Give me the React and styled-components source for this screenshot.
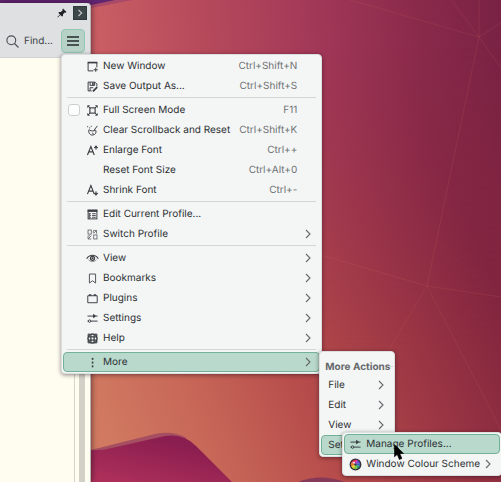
import React from "react";
import styled, { createGlobalStyle } from "styled-components";

const Global = createGlobalStyle`
  *, *::before, *::after { box-sizing: border-box; }
  body {
    margin: 0;
    font-family: Inter, "Noto Sans", sans-serif;
    font-size: 10px;
    line-height: 16px;
    text-rendering: geometricPrecision;
    color: #2c3034;
  }
  button { font: inherit; color: inherit; text-rendering: inherit; }
  svg { display: block; }
`;

const Desktop = styled.main`
  position: relative;
  display: flex;
  align-items: stretch;
  min-height: 100vh;
  padding-top: 3px;
  overflow: hidden;
  background: #a03a50;
`;

const Wallpaper = styled.svg`
  position: absolute;
  inset: 0;
  width: 100%;
  height: 100%;
`;

const Terminal = styled.section`
  position: relative;
  display: flex;
  flex-direction: column;
  border-right: 1px solid #b9b4b4;
  border-top-right-radius: 4px;
  background: #dfe0e2;
  box-shadow: 0 1px 6px rgba(30, 10, 20, 0.7);
`;

const TitleBar = styled.header`
  display: flex;
  justify-content: flex-end;
  align-items: center;
  gap: 6px;
  height: 20px;
  padding-right: 3px;
`;

const TitleButton = styled.button`
  display: grid;
  place-items: center;
  padding: 0;
  border: 0;
  background: none;
`;

const ToolBar = styled.div`
  display: flex;
  align-items: center;
  gap: 8px;
  padding: 6px 5px 4px 6px;
  border-bottom: 1px solid #d0d1d1;
`;

const FindButton = styled.button`
  display: flex;
  align-items: center;
  gap: 5px;
  padding: 0;
  border: 0;
  background: none;
  color: #3c4044;
`;

const MenuAnchor = styled.div`
  position: relative;
`;

const MenuButton = styled.button`
  display: grid;
  place-items: center;
  width: 24px;
  height: 24px;
  padding: 0;
  border: 1px solid #92c9b5;
  border-radius: 4px;
  background: #b7d1c7;
`;

const Screen = styled.div`
  display: flex;
  flex: 1;
  justify-content: flex-end;
  background: #fffdf0;
`;

const ScrollTrack = styled.div`
  display: flex;
  padding: 0 5px 0 4px;
  border-left: 1px solid #d6d5ca;
`;

const ScrollThumb = styled.div`
  width: 6px;
  background: #d2d1c7;
`;

const Menu = styled.div`
  position: absolute;
  top: ${(p) => p.$top};
  left: ${(p) => p.$left};
  z-index: 1;
  padding: 1px;
  border: 1px solid #dcdfe0;
  border-radius: 4px;
  background: #f4f6f5;
  box-shadow: 0 1px 4px rgba(30, 10, 20, 0.5);
  white-space: nowrap;
`;

const Separator = styled.hr`
  height: 1px;
  margin: 1px 4px 2px;
  border: 0;
  background: #d3d6d6;
`;

const RowAnchor = styled.div`
  position: relative;
`;

const rowStyle = `
  display: flex;
  align-items: center;
  width: 100%;
  height: 20px;
  border-radius: 4px;
  text-align: left;
`;

const Row = styled.button`
  ${rowStyle}
  padding: 0 8px 0 ${(p) => (p.$plain ? "6px" : "4px")};
  border: 1px solid ${(p) => (p.$active ? "#72b097" : "transparent")};
  background: ${(p) => (p.$active ? "#b9d9cc" : "transparent")};
`;

const CheckRow = styled.label`
  ${rowStyle}
  padding: 0 8px 0 4px;
  border: 1px solid transparent;
`;

const CheckSlot = styled.span`
  flex: none;
  width: 18px;
`;

const CheckBox = styled.input`
  appearance: none;
  display: block;
  width: 12px;
  height: 12px;
  margin: 0;
  border: 1px solid #cdd0d1;
  border-radius: 3px;
  background: #fdfefe;
`;

const IconSlot = styled.span`
  flex: none;
  width: 17px;
`;

const Label = styled.span`
  flex: 1;
`;

const Shortcut = styled.span`
  margin-left: 9px;
  padding-right: 14px;
  color: #6e7174;
`;

const ArrowSlot = styled.span`
  margin-left: 5px;
`;

const MenuTitle = styled.div`
  display: flex;
  align-items: center;
  height: 22px;
  padding: 5px 0 0 4px;
  font-weight: 700;
  color: #65686b;
  &::after {
    content: "";
    flex: 1;
    min-width: 3px;
    height: 1px;
    background: #d3d6d6;
  }
`;

const Pointer = styled.svg`
  position: absolute;
  left: 50px;
  top: 10px;
  z-index: 2;
`;

const Glyph = ({ children, size = 13 }) => (
  <svg width={size} height={size} viewBox="0 0 16 16" fill="none" stroke="#3a3e42" strokeWidth="1.2" aria-hidden="true">
    {children}
  </svg>
);

const icons = {
  newWindow: (
    <Glyph>
      <path d="M9 13.4H2.6V3H13.4V9" />
      <path d="M2 3.2H14" strokeWidth="2" />
      <path d="M12 9.5V14.5M9.5 12H14.5" />
    </Glyph>
  ),
  save: (
    <Glyph>
      <path d="M7 13.4H2.6V2.6H11L13.4 5V8" />
      <path d="M5 2.6V6.6H10.6V2.6M5 13V9.5H9" />
      <path d="M8.5 3V6" strokeWidth="2" />
      <path d="M8.5 14L13.8 8.7" strokeWidth="2.2" />
    </Glyph>
  ),
  fullScreen: (
    <Glyph>
      <rect x="4.8" y="4.8" width="6.4" height="6.4" strokeWidth="1.4" />
      <path d="M2.2 4.6V2.2H4.6M11.4 2.2H13.8V4.6M13.8 11.4V13.8H11.4M4.6 13.8H2.2V11.4M2.2 2.2L5 5M13.8 2.2L11 5M13.8 13.8L11 11M2.2 13.8L5 11" />
    </Glyph>
  ),
  clear: (
    <Glyph>
      <path d="M3.5 7C2.8 11 5 14 8.3 13.6C11.5 13.2 12.8 11 12.2 8" />
      <path d="M4 7.2C7 9.2 9 8.8 12 7.6M10 7.5L14 2.3" />
      <path d="M2 2.5V4M4.5 4V5.5M6.5 2V3.5" strokeWidth="1" />
      <path d="M7.5 11L9.5 12.5" />
    </Glyph>
  ),
  enlarge: (
    <Glyph>
      <path d="M1.8 13.5L6 3L10.2 13.5M3.4 9.7H8.6" strokeWidth="1.4" />
      <path d="M12.3 2V7M10.4 4.5L12.3 2.4L14.2 4.5M10 4.5H14.6" />
    </Glyph>
  ),
  shrink: (
    <Glyph>
      <path d="M1.8 12.5L6 2L10.2 12.5M3.4 8.7H8.6" strokeWidth="1.4" />
      <path d="M12.3 9V14M10.4 11.7L12.3 13.8L14.2 11.7M10 11.5H14.6" />
    </Glyph>
  ),
  edit: (
    <Glyph>
      <rect x="2.6" y="2.6" width="10.8" height="10.8" />
      <path d="M2 3.5H14" strokeWidth="2.6" />
      <path d="M4.5 7H6M4.5 9.2H6M4.5 11.4H6M7.5 7H12M7.5 9.2H12M7.5 11.4H12" strokeWidth="1.1" />
      <path d="M4 6V13" />
    </Glyph>
  ),
  switchProfile: (
    <Glyph>
      <g stroke="#5c6063" strokeWidth="1">
        <rect x="2.5" y="2.5" width="4" height="5" />
        <rect x="9.5" y="8.5" width="4" height="5" />
        <path d="M9 3H13M13 3V7M9.5 6.5L13 3M9 3.5V6" />
        <path d="M2.5 9.5V13.5H6.5M6.5 9.5L2.5 13.5M3 9.5H5" />
      </g>
    </Glyph>
  ),
  view: (
    <Glyph>
      <path d="M0.8 8.3C3 4.9 5.5 4 8 4S13 4.9 15.2 8.3" strokeWidth="1.4" />
      <path d="M3 9.4C4.8 11.4 6.5 11.8 8 11.8S11.2 11.4 13 9.4" strokeWidth="0.7" />
      <circle cx="8" cy="7.8" r="2.5" strokeWidth="1.5" />
      <circle cx="8" cy="7.8" r="1.2" fill="#3a3e42" stroke="none" />
    </Glyph>
  ),
  bookmark: (
    <Glyph>
      <path d="M4.2 2.5H11.8V13.6L8 10.8L4.2 13.6Z" stroke="#505457" />
    </Glyph>
  ),
  plugins: (
    <Glyph>
      <path d="M2.2 4.6H13.8V13.2H2.2Z" />
      <path d="M3.5 3.6H6.5M9.5 3.6H12.5" strokeWidth="1.8" />
    </Glyph>
  ),
  settings: (
    <Glyph>
      <path d="M1.8 5H14.2M6 11.2H14.2M1.8 11.2H2.8" />
      <path d="M9.3 3L11.6 5L9.3 7Z" fill="#3a3e42" />
      <circle cx="4.4" cy="11.2" r="1.5" />
    </Glyph>
  ),
  help: (
    <Glyph>
      <circle cx="8" cy="8" r="5.6" strokeWidth="1.8" />
      <path d="M6 2.5V13.5M10 2.5V13.5M2.5 6H13.5M2.5 10H13.5" strokeWidth="1.5" />
      <path d="M2.6 5V2.6H5M11 2.6H13.4V5M13.4 11V13.4H11M5 13.4H2.6V11" />
    </Glyph>
  ),
  more: (
    <Glyph>
      <g fill="#3a3e42" stroke="none">
        <rect x="7.1" y="2.3" width="2" height="2.4" />
        <rect x="7.1" y="6.9" width="2" height="2.4" />
        <rect x="7.1" y="11.5" width="2" height="2.4" />
      </g>
    </Glyph>
  ),
  colour: (
    <Glyph>
      <g strokeWidth="5" transform="rotate(-112 8 8)">
        {["#d829a8", "#7d3fd0", "#3a62c8", "#2fa36a", "#7cc53a", "#e0d02a", "#ee7a28", "#e02c3c"].map((c, i) => (
          <circle key={c} cx="8" cy="8" r="4" stroke={c} pathLength="8" strokeDasharray="1 7" strokeDashoffset={-i} />
        ))}
      </g>
      <circle cx="8" cy="8" r="6.5" stroke="#33303a" strokeWidth="1.6" />
      <circle cx="8" cy="8" r="1.6" fill="#33363a" stroke="none" />
    </Glyph>
  ),
};

const Chevron = () => (
  <svg width="6" height="10" viewBox="0 0 6 10" fill="none" stroke="#64686b" strokeWidth="1.1" aria-hidden="true">
    <path d="M1 1L5 5L1 9" />
  </svg>
);

const groups = [
  [
    { icon: "newWindow", label: "New Window", keys: "Ctrl+Shift+N" },
    { icon: "save", label: "Save Output As...", keys: "Ctrl+Shift+S" },
  ],
  [
    { icon: "fullScreen", label: "Full Screen Mode", keys: "F11", check: true },
    { icon: "clear", label: "Clear Scrollback and Reset", keys: "Ctrl+Shift+K" },
    { icon: "enlarge", label: "Enlarge Font", keys: "Ctrl++" },
    { label: "Reset Font Size", keys: "Ctrl+Alt+0" },
    { icon: "shrink", label: "Shrink Font", keys: "Ctrl+-" },
  ],
  [
    { icon: "edit", label: "Edit Current Profile..." },
    { icon: "switchProfile", label: "Switch Profile", sub: true },
  ],
  [
    { icon: "view", label: "View", sub: true },
    { icon: "bookmark", label: "Bookmarks", sub: true },
    { icon: "plugins", label: "Plugins", sub: true },
    { icon: "settings", label: "Settings", sub: true },
    { icon: "help", label: "Help", sub: true },
  ],
];

function MainItem({ item, active }) {
  const content = (
    <>
      <CheckSlot>{item.check && <CheckBox type="checkbox" />}</CheckSlot>
      <IconSlot>{icons[item.icon]}</IconSlot>
      <Label>{item.label}</Label>
      {item.keys && <Shortcut>{item.keys}</Shortcut>}
      {item.sub && <Chevron />}
    </>
  );
  return item.check ? (
    <CheckRow>{content}</CheckRow>
  ) : (
    <Row type="button" role="menuitem" $active={active}>{content}</Row>
  );
}

function ProfileMenu() {
  return (
    <Menu role="menu" $top="-3px" $left="21px">
      <RowAnchor>
        <Row type="button" role="menuitem" $active>
          <IconSlot>{icons.settings}</IconSlot>
          <Label>Manage Profiles...</Label>
        </Row>
        <Pointer width="11" height="18" viewBox="0 0 11 18" aria-hidden="true">
          <path d="M0.5 0.5V12.8L3.2 10.4L5.4 15.5L7.9 14.4L5.8 9.5H9.6Z" fill="#000" stroke="#000" strokeWidth="0.6" />
        </Pointer>
      </RowAnchor>
      <Row type="button" role="menuitem">
        <IconSlot>{icons.colour}</IconSlot>
        <Label>Window Colour Scheme</Label>
        <ArrowSlot><Chevron /></ArrowSlot>
      </Row>
    </Menu>
  );
}

function MoreMenu() {
  return (
    <Menu role="menu" $top="-1px" $left="calc(100% - 1px)">
      <MenuTitle>More Actions</MenuTitle>
      {["File", "Edit", "View"].map((label) => (
        <Row key={label} type="button" role="menuitem" $plain>
          <Label>{label}</Label>
          <Chevron />
        </Row>
      ))}
      <RowAnchor>
        <Row type="button" role="menuitem" $plain $active>
          <Label>Settings</Label>
        </Row>
        <ProfileMenu />
      </RowAnchor>
    </Menu>
  );
}

function Background() {
  return (
    <Wallpaper viewBox="0 0 501 482" preserveAspectRatio="xMinYMin slice" aria-hidden="true">
      <defs>
        <linearGradient id="upper" gradientUnits="userSpaceOnUse" x1="90" y1="60" x2="501" y2="20">
          <stop offset="0" stopColor="#cb6065" />
          <stop offset="0.25" stopColor="#b84c5c" />
          <stop offset="0.55" stopColor="#a23858" />
          <stop offset="0.8" stopColor="#8a2a4b" />
          <stop offset="1" stopColor="#792243" />
        </linearGradient>
        <linearGradient id="lower" gradientUnits="userSpaceOnUse" x1="110" y1="450" x2="501" y2="300">
          <stop offset="0" stopColor="#d17a61" />
          <stop offset="0.25" stopColor="#c66557" />
          <stop offset="0.48" stopColor="#b64c4b" />
          <stop offset="0.75" stopColor="#9c3744" />
          <stop offset="1" stopColor="#82253e" />
        </linearGradient>
        <linearGradient id="fade" x1="0" y1="0" x2="0" y2="1">
          <stop offset="0.1" stopColor="#000" />
          <stop offset="0.72" stopColor="#fff" />
        </linearGradient>
        <mask id="lowerMask"><rect width="501" height="482" fill="url(#fade)" /></mask>
        <linearGradient id="hill" x1="0" y1="1" x2="0.7" y2="0.2">
          <stop offset="0" stopColor="#b5345c" />
          <stop offset="1" stopColor="#8b1e50" />
        </linearGradient>
      </defs>
      <rect width="501" height="482" fill="url(#upper)" />
      <rect width="501" height="482" fill="url(#lower)" mask="url(#lowerMask)" />
      <g stroke="#d96a62" strokeOpacity="0.2" strokeWidth="0.8" fill="none">
        <path d="M350 0L479 37L451 0M479 0V37L501 23M479 37L501 68M479 37L427 286L321 255M427 286L501 297M427 286L310 482M427 286L501 430" />
        <path d="M169 372L175 434M95 20L105 54" />
      </g>
      <path d="M0 0H133L91 8L0 30Z" fill="#a84a68" />
      <path d="M0 0H115L91 5L0 20Z" fill="#5f2470" />
      <path d="M60 450H91L155 434Q172 430 187 438L100 456L60 460Z" fill="#a54d61" />
      <path d="M60 450H91Q101 451 112 448L165 436Q184 433 196 446L232 482H60Z" fill="url(#hill)" />
      <path d="M298 482Q320 473 345 482Z" fill="#87395a" />
    </Wallpaper>
  );
}

export default function App() {
  return (
    <Desktop>
      <Global />
      <Background />
      <Terminal>
        <TitleBar>
          <TitleButton type="button" aria-label="Keep above">
            <svg width="10" height="10" viewBox="0 0 10 10" fill="#202326" aria-hidden="true">
              <path d="M6 0.5L9.5 4L8.5 4.7L7.7 4.4L6 6.2L6 8L5 8.5L3.4 6.9L0.8 9.5L0.4 9.1L3 6.5L1.4 5L2 4.1L3.9 4L5.7 2.3L5.4 1.3Z" />
            </svg>
          </TitleButton>
          <TitleButton type="button" aria-label="Window menu">
            <svg width="14" height="14" viewBox="0 0 14 14" aria-hidden="true">
              <rect width="14" height="14" fill="#2f3a3d" />
              <rect x="1" y="1" width="12" height="12" fill="#3d4649" />
              <path d="M5.5 4L8.7 7L5.5 10" fill="none" stroke="#bfc6c6" strokeWidth="1.2" />
            </svg>
          </TitleButton>
        </TitleBar>
        <ToolBar>
          <FindButton type="button">
            <svg width="13" height="13" viewBox="0 0 13 13" fill="none" stroke="#4a4e52" strokeWidth="1.1" aria-hidden="true">
              <circle cx="5.3" cy="5.3" r="4.4" />
              <path d="M8.5 8.5L12.5 12.5" />
            </svg>
            Find...
          </FindButton>
          <MenuAnchor>
            <MenuButton type="button" aria-label="Open menu" aria-expanded="true">
              <svg width="14" height="12" viewBox="0 0 14 12" stroke="#26292c" strokeWidth="1.4" aria-hidden="true">
                <path d="M1 2H13M1 6H13M1 10H13" />
              </svg>
            </MenuButton>
            <Menu role="menu" $top="calc(100% + 1px)" $left="0">
              {groups.map((items) => (
                <React.Fragment key={items[0].label}>
                  {items.map((item) => <MainItem key={item.label} item={item} />)}
                  <Separator />
                </React.Fragment>
              ))}
              <RowAnchor>
                <MainItem item={{ icon: "more", label: "More", sub: true }} active />
                <MoreMenu />
              </RowAnchor>
            </Menu>
          </MenuAnchor>
        </ToolBar>
        <Screen>
          <ScrollTrack><ScrollThumb /></ScrollTrack>
        </Screen>
      </Terminal>
    </Desktop>
  );
}
